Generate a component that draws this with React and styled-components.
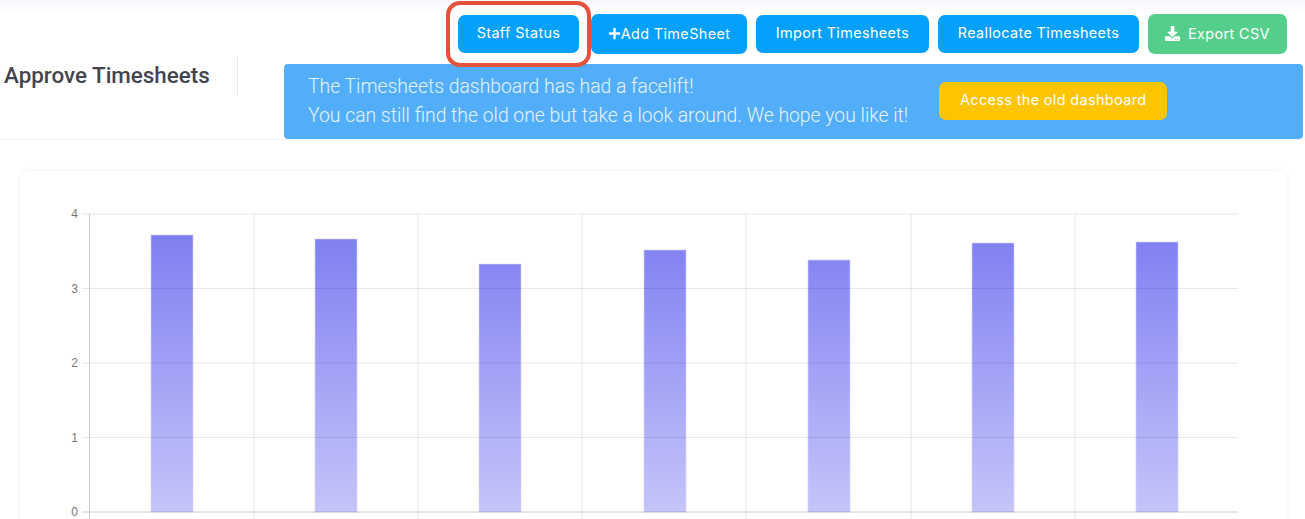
import React from "react";
import styled, { createGlobalStyle } from "styled-components";
import { FaPlus, FaDownload } from "react-icons/fa";

const GlobalStyle = createGlobalStyle`
  html, body {
    margin: 0;
    padding: 0;
    height: 519px;
    overflow: hidden;
    background: #fff;
    font-family: "Inter", "Liberation Sans", sans-serif;
  }
`;

const Page = styled.div`
  height: 519px;
  overflow: hidden;
  background: linear-gradient(#f7f5fc 0, #fff 12px);
  box-sizing: border-box;
`;

const Header = styled.header`
  display: flex;
  height: 140px;
  box-sizing: border-box;
  border-bottom: 1px solid #f3f3f6;
`;

const TitleBlock = styled.div`
  width: 238px;
  height: 40px;
  margin-top: 56px;
  padding-left: 4px;
  box-sizing: border-box;
  border-right: 1px solid #ebebee;
  display: flex;
  align-items: center;
`;

const Title = styled.h1`
  margin: 0 0 2px;
  font-family: "Roboto", sans-serif;
  font-size: 22.4px;
  font-weight: 500;
  line-height: 36px;
  color: #44444f;
  white-space: nowrap;
`;

const HeaderBody = styled.div`
  flex: 1;
  padding: 14px 2px 0 46px;
  display: flex;
  flex-direction: column;
  min-width: 0;
`;

const Actions = styled.div`
  display: flex;
  justify-content: flex-end;
  align-items: flex-start;
  gap: 9px;
  padding-right: 16px;
  height: 50px;
`;

const Button = styled.button`
  position: relative;
  height: ${(p) => (p.$tall ? 40 : 38)}px;
  margin-top: ${(p) => (p.$tall ? 0 : 1)}px;
  width: ${(p) => p.$w}px;
  margin-right: ${(p) => p.$mr || 0}px;
  border: 0;
  border-radius: 7px;
  padding: 0 0 ${(p) => (p.$tall ? 2 : 3)}px;
  background: ${(p) => p.$bg || "#03a0fc"};
  color: #fff;
  font-family: "Inter", "Liberation Sans", sans-serif;
  font-size: 14.4px;
  font-weight: 400;
  letter-spacing: 0.38px;
  display: inline-flex;
  align-items: center;
  justify-content: center;
  white-space: nowrap;
`;

const Highlight = styled.span`
  position: absolute;
  left: -12px;
  top: -14px;
  width: 145px;
  height: 66px;
  box-sizing: border-box;
  border: 4px solid #e4513d;
  border-radius: 14px;
  pointer-events: none;
`;

const Banner = styled.div`
  height: 75px;
  box-sizing: border-box;
  background: #53aef9;
  border-radius: 4px;
  padding: 8px 0 0 24px;
  display: flex;
  align-items: flex-start;
  gap: 31px;
`;

const BannerText = styled.p`
  margin: 0;
  font-family: "Roboto", sans-serif;
  font-weight: 300;
  font-size: 19.35px;
  line-height: 29px;
  color: #e6f3ff;
  white-space: nowrap;
`;

const OldButton = styled(Button)`
  margin-top: 10px;
`;

const Content = styled.main`
  padding: 31px 18px 0 20px;
`;

const ChartCard = styled.section`
  height: 400px;
  background: #fff;
  border-radius: 8px;
  box-shadow: 0 0 5px rgba(40, 40, 80, 0.07);
`;

const ChartSvg = styled.svg`
  display: block;
`;

const IconGap = styled.span`
  display: inline-flex;
  margin-right: ${(p) => p.$gap}px;
`;

const bars = [
  { x: 151, top: 235 },
  { x: 315, top: 239 },
  { x: 479, top: 264 },
  { x: 644, top: 250 },
  { x: 808, top: 260 },
  { x: 972, top: 243 },
  { x: 1136, top: 242 },
];
const vLines = [254, 418, 582, 746, 911, 1075];
const ticks = [
  { label: "4", y: 214 },
  { label: "3", y: 288.5 },
  { label: "2", y: 363 },
  { label: "1", y: 437.5 },
];

// chart coordinates are page coordinates, card sits at 20,171
const Chart = () => (
  <ChartSvg width="1267" height="348" viewBox="20 171 1267 348">
    <defs>
      <linearGradient id="barFill" gradientUnits="userSpaceOnUse" x1="0" y1="235" x2="0" y2="512">
        <stop offset="0" stopColor="#7f7ff2" />
        <stop offset="1" stopColor="#c5c5fa" />
      </linearGradient>
    </defs>
    {bars.map((b) => (
      <rect key={b.x} x={b.x} y={b.top} width="42" height={512 - b.top} fill="url(#barFill)" stroke="#d4d4fb" strokeWidth="0.6" />
    ))}
    {vLines.map((x) => (
      <line key={x} x1={x} x2={x} y1="214" y2="519" stroke="#000" strokeOpacity="0.1" />
    ))}
    <line x1="89.5" x2="89.5" y1="214" y2="519" stroke="#000" strokeOpacity="0.2" />
    {ticks.map((t) => (
      <g key={t.label}>
        <line x1="82" x2="1238" y1={t.y} y2={t.y} stroke="#000" strokeOpacity="0.09" />
        <text x="78" y={t.y + 4} textAnchor="end" fontFamily="Liberation Sans, sans-serif" fontSize="12" fill="#777">{t.label}</text>
      </g>
    ))}
    <line x1="82" x2="1238" y1="512" y2="512" stroke="#000" strokeOpacity="0.1" strokeWidth="2" />
    <text x="78" y="516" textAnchor="end" fontFamily="Liberation Sans, sans-serif" fontSize="12" fill="#777">0</text>
  </ChartSvg>
);

export default function App() {
  return (
    <Page>
      <GlobalStyle />
      <Header>
        <TitleBlock>
          <Title>Approve Timesheets</Title>
        </TitleBlock>
        <HeaderBody>
          <Actions>
            <Button $w={121} $mr={3}>
              Staff Status
              <Highlight />
            </Button>
            <Button $w={156} $tall>
              <IconGap $gap={0}><FaPlus size={13} /></IconGap>Add TimeSheet
            </Button>
            <Button $w={173}>Import Timesheets</Button>
            <Button $w={201}>Reallocate Timesheets</Button>
            <Button $w={139} $tall $bg="#54cf8b">
              <IconGap $gap={8}><FaDownload size={15} /></IconGap>Export CSV
            </Button>
          </Actions>
          <Banner>
            <BannerText>
              The Timesheets dashboard has had a facelift!
              <br />
              You can still find the old one but take a look around. We hope you like it!
            </BannerText>
            <OldButton $w={228} $bg="#fdc500">Access the old dashboard</OldButton>
          </Banner>
        </HeaderBody>
      </Header>
      <Content>
        <ChartCard>
          <Chart />
        </ChartCard>
      </Content>
    </Page>
  );
}
